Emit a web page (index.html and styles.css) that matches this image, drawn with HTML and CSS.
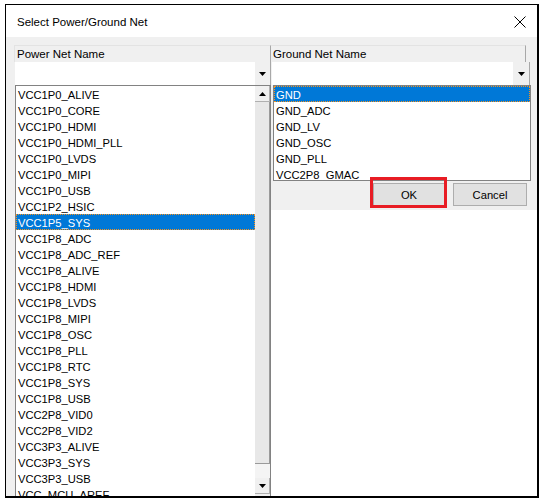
FILE: index.html
```html
<!DOCTYPE html>
<html>
<head>
<meta charset="utf-8">
<link rel="stylesheet" href="styles.css">
</head>
<body>
<div class="window">
  <div class="titlebar">
    <span class="title">Select Power/Ground Net</span>
    <svg class="close" width="12" height="12" viewBox="0 0 12 12"><path d="M0.5 0.5L11.5 11.5M11.5 0.5L0.5 11.5" stroke="#000" stroke-width="1" fill="none"/></svg>
  </div>
  <div class="client">
    <div class="col col-power">
      <div class="hdr">Power Net Name</div>
      <div class="combo">
        <div class="field"></div>
        <div class="drop"><svg width="7" height="4" viewBox="0 0 7 4"><path d="M0 0H7L3.5 4Z" fill="#000"/></svg></div>
      </div>
      <div class="list power-list">
        <div class="items">
          <div class="item">VCC1P0_ALIVE</div>
          <div class="item">VCC1P0_CORE</div>
          <div class="item">VCC1P0_HDMI</div>
          <div class="item">VCC1P0_HDMI_PLL</div>
          <div class="item">VCC1P0_LVDS</div>
          <div class="item">VCC1P0_MIPI</div>
          <div class="item">VCC1P0_USB</div>
          <div class="item">VCC1P2_HSIC</div>
          <div class="item selected">VCC1P5_SYS</div>
          <div class="item">VCC1P8_ADC</div>
          <div class="item">VCC1P8_ADC_REF</div>
          <div class="item">VCC1P8_ALIVE</div>
          <div class="item">VCC1P8_HDMI</div>
          <div class="item">VCC1P8_LVDS</div>
          <div class="item">VCC1P8_MIPI</div>
          <div class="item">VCC1P8_OSC</div>
          <div class="item">VCC1P8_PLL</div>
          <div class="item">VCC1P8_RTC</div>
          <div class="item">VCC1P8_SYS</div>
          <div class="item">VCC1P8_USB</div>
          <div class="item">VCC2P8_VID0</div>
          <div class="item">VCC2P8_VID2</div>
          <div class="item">VCC3P3_ALIVE</div>
          <div class="item">VCC3P3_SYS</div>
          <div class="item">VCC3P3_USB</div>
          <div class="item">VCC_MCU_AREF</div>
        </div>
        <div class="vscroll">
          <div class="sbtn"><svg width="7" height="4" viewBox="0 0 7 4"><path d="M0 4H7L3.5 0Z" fill="#000"/></svg></div>
          <div class="thumb"></div>
          <div class="track"></div>
          <div class="sbtn"><svg width="7" height="4" viewBox="0 0 7 4"><path d="M0 0H7L3.5 4Z" fill="#000"/></svg></div>
        </div>
      </div>
    </div>
    <div class="col col-ground">
      <div class="hdr">Ground Net Name</div>
      <div class="combo">
        <div class="field"></div>
        <div class="drop"><svg width="7" height="4" viewBox="0 0 7 4"><path d="M0 0H7L3.5 4Z" fill="#000"/></svg></div>
      </div>
      <div class="list ground-list">
        <div class="items">
          <div class="item selected">GND</div>
          <div class="item">GND_ADC</div>
          <div class="item">GND_LV</div>
          <div class="item">GND_OSC</div>
          <div class="item">GND_PLL</div>
          <div class="item">VCC2P8_GMAC</div>
        </div>
      </div>
      <div class="buttons">
        <div class="btn ok">OK<span class="mark"></span></div>
        <div class="btn cancel">Cancel</div>
      </div>
      <div class="fill"></div>
    </div>
  </div>
</div>
</body>
</html>
```

FILE: styles.css
```css
html, body {
  margin: 0;
  padding: 0;
  background: #ffffff;
}

body {
  font-family: "Liberation Sans", Arial, sans-serif;
  color: #000;
}

.window {
  margin: 4px 0 0 5px;
  width: 534px;
  height: 494px;
  box-sizing: border-box;
  border-style: solid;
  border-color: #000;
  border-width: 1px 2px 2px 1px;
  background: #fff;
  display: flex;
  flex-direction: column;
  overflow: hidden;
}

.titlebar {
  flex: none;
  height: 32px;
  box-sizing: border-box;
  padding: 0 11px 0 11px;
  display: flex;
  align-items: center;
  justify-content: space-between;
  background: #fff;
}

.title {
  font-size: 11.5px;
  padding-top: 2px;
}

.close {
  display: block;
  margin-top: 1px;
}

.client {
  flex: 1;
  min-height: 0;
  display: flex;
  background: #f0f0f0;
  padding: 8px 0 0 8px;
}

.col {
  display: flex;
  flex-direction: column;
  min-height: 0;
}

.col-power {
  width: 257px;
  flex: none;
}

.col-ground {
  flex: 1;
}

.hdr {
  flex: none;
  height: 17px;
  box-sizing: border-box;
  font-size: 11.5px;
  line-height: 16px;
  padding-left: 2px;
  border-top: 1px solid #e3e3e3;
  border-right: 1px solid #a8a8a8;
  white-space: nowrap;
}

.col-power .hdr {
  border-left: 1px solid #e3e3e3;
}

.col-ground .hdr {
  width: 255px;
}

.combo {
  flex: none;
  height: 23px;
  box-sizing: border-box;
  display: flex;
  background: #fff;
  margin-left: 1px;
}

.col-power .combo {
  width: 256px;
  border-right: 1px solid #a8a8a8;
}

.col-ground .combo {
  width: 258px;
  border-right: 1px solid #a8a8a8;
}

.field {
  flex: 1;
}

.drop {
  width: 15px;
  flex: none;
  background: #f0f0f0;
  display: flex;
  align-items: center;
  justify-content: center;
}

.col-ground .drop {
  width: 16px;
}

.drop svg, .sbtn svg {
  display: block;
}

.list {
  background: #fff;
  box-sizing: border-box;
  border: 1px solid #828282;
  display: flex;
  overflow: hidden;
}

.power-list {
  flex: 1;
  min-height: 0;
  margin-left: 1px;
  width: 256px;
  border-bottom: none;
}

.ground-list {
  flex: none;
  margin-left: 2px;
  width: 258px;
  height: 96px;
}

.items {
  flex: 1;
  min-width: 0;
  overflow: hidden;
}

.item {
  height: 16px;
  box-sizing: border-box;
  padding: 1px 0 0 2px;
  line-height: 16px;
  font-size: 11.2px;
  white-space: nowrap;
}

.item.selected {
  background: #0078d7;
  color: #fff;
  outline: 1px dotted #f7931e;
  outline-offset: -1px;
}

.vscroll {
  width: 15px;
  flex: none;
  display: flex;
  flex-direction: column;
  background: #f0f0f0;
}

.sbtn {
  height: 16px;
  flex: none;
  box-sizing: border-box;
  background: #f0f0f0;
  border-right: 1px solid #b0b0b0;
  border-bottom: 1px solid #b0b0b0;
  display: flex;
  align-items: center;
  justify-content: center;
}

.thumb {
  height: 362px;
  flex: none;
  box-sizing: border-box;
  background: #e8e8e8;
  border-right: 1px solid #9a9a9a;
  border-bottom: 1px solid #9a9a9a;
}

.track {
  height: 14px;
  flex: none;
  background: #f4f4f4;
}

.buttons {
  flex: none;
  display: flex;
  justify-content: flex-end;
  gap: 8px;
  padding: 2px 10px 4px 0;
}

.btn {
  position: relative;
  height: 23px;
  box-sizing: border-box;
  border: 1px solid #adadad;
  background: #e1e1e1;
  font-size: 11.2px;
  display: flex;
  align-items: center;
  justify-content: center;
}

.ok {
  width: 72px;
}

.cancel {
  width: 74px;
}

.mark {
  position: absolute;
  left: -4px;
  top: -7px;
  width: 77px;
  height: 31px;
  box-sizing: border-box;
  border: 3px solid #e81c24;
  pointer-events: none;
}

.fill {
  flex: 1;
  background: #fff;
}
```
